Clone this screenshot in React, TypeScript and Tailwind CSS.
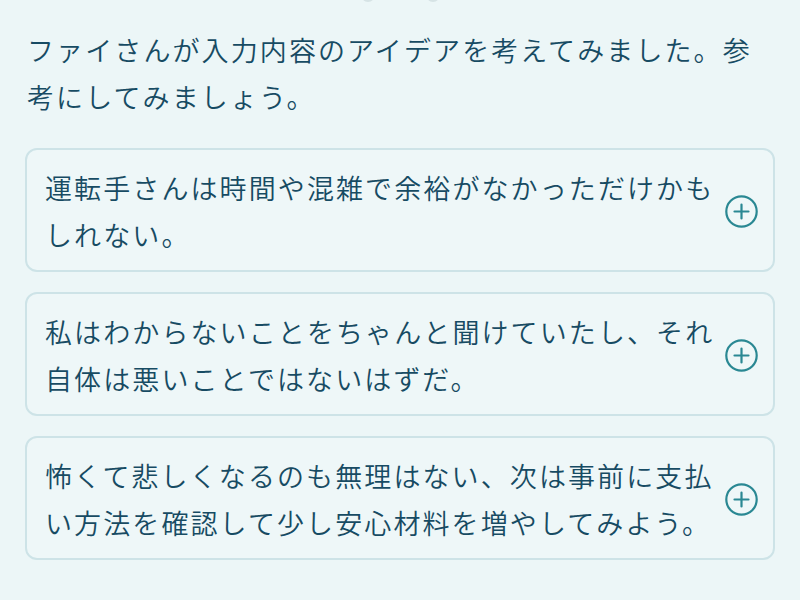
import React from "react";

const ideas = [
  "運転手さんは時間や混雑で余裕がなかっただけかもしれない。",
  "私はわからないことをちゃんと聞けていたし、それ自体は悪いことではないはずだ。",
  "怖くて悲しくなるのも無理はない、次は事前に支払い方法を確認して少し安心材料を増やしてみよう。",
];

function PlusCircle() {
  return (
    <svg width="33" height="33" viewBox="0 0 33 33" fill="none" className="shrink-0">
      <circle cx="16.5" cy="16.5" r="15.2" stroke="#2a8893" strokeWidth="2.2" />
      <path d="M9.5 16.5H23.5M16.5 9.5V23.5" stroke="#2a8893" strokeWidth="2.2" strokeLinecap="round" />
    </svg>
  );
}

export default function App() {
  return (
    <div
      className="w-[800px] h-[600px] overflow-hidden bg-[#ecf6f7] text-[#174b63] font-[350]"
      style={{ fontFamily: '"Noto Sans CJK JP", "Noto Sans", sans-serif' }}
    >
      <div className="-mt-[12px] h-[14px] flex justify-center gap-[51px]">
        <div className="w-[14px] h-[14px] rounded-full bg-[#d6e3e5]" />
        <div className="w-[14px] h-[14px] rounded-full bg-[#d6e3e5]" />
      </div>
      <div className="px-[25px] pt-[24px]">
        <p className="text-[27px] leading-[47px] tracking-[2.1px] pl-[2px]">
          ファイさんが入力内容のアイデアを考えてみました。参考にしてみましょう。
        </p>
        <div className="mt-[28px] flex flex-col gap-5">
          {ideas.map((t) => (
            <div
              key={t}
              className="flex items-center gap-[7px] rounded-[12px] border-2 border-[#cde3e7] bg-[#eef7f8] pl-[18px] pr-[15px] pt-[14px] pb-[12px]"
            >
              <p className="flex-1 text-[27px] leading-[47px] tracking-[2.1px]">{t}</p>
              <PlusCircle />
            </div>
          ))}
        </div>
      </div>
    </div>
  );
}
